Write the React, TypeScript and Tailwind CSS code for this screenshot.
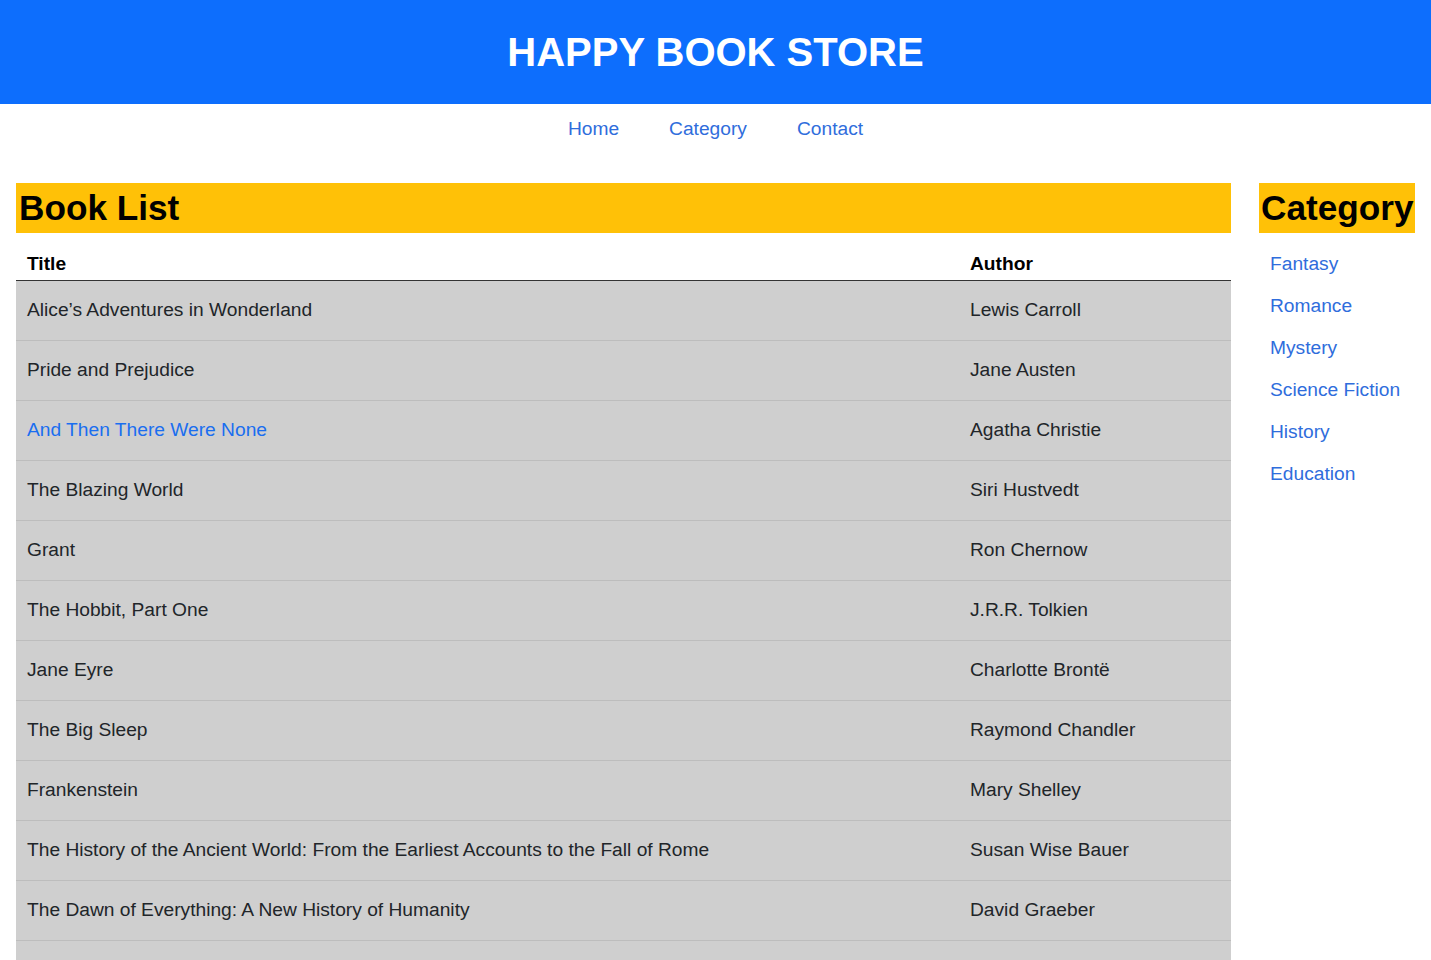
import React from "react";

const books = [
  { title: "Alice’s Adventures in Wonderland", author: "Lewis Carroll" },
  { title: "Pride and Prejudice", author: "Jane Austen" },
  { title: "And Then There Were None", author: "Agatha Christie", active: true },
  { title: "The Blazing World", author: "Siri Hustvedt" },
  { title: "Grant", author: "Ron Chernow" },
  { title: "The Hobbit, Part One", author: "J.R.R. Tolkien" },
  { title: "Jane Eyre", author: "Charlotte Brontë" },
  { title: "The Big Sleep", author: "Raymond Chandler" },
  { title: "Frankenstein", author: "Mary Shelley" },
  { title: "The History of the Ancient World: From the Earliest Accounts to the Fall of Rome", author: "Susan Wise Bauer" },
  { title: "The Dawn of Everything: A New History of Humanity", author: "David Graeber" },
];

const categories = ["Fantasy", "Romance", "Mystery", "Science Fiction", "History", "Education"];

const App = () => {
  return (
    <div className="min-h-screen bg-white font-['Liberation_Sans',Arial,sans-serif] text-[19.2px] text-[#212529]">
      <header className="flex h-[104px] items-center justify-center bg-[#0d6efd]">
        <h1 className="text-[40px] font-bold leading-none text-white">HAPPY BOOK STORE</h1>
      </header>
      <nav className="flex justify-center gap-[50px] pt-[13px] pb-[11px] leading-[24px] text-[#2f6ddc]">
        <a href="#">Home</a>
        <a href="#">Category</a>
        <a href="#">Contact</a>
      </nav>
      <div className="mt-[31px] flex gap-[28px] px-4">
        <main className="flex-1">
          <h2 className="flex h-[50px] items-center bg-[#ffc107] px-[3px] text-[35.2px] font-bold leading-none text-black">
            Book List
          </h2>
          <div className="mt-2">
            <div className="grid h-[40px] grid-cols-[943px_1fr] items-end border-b border-[#333] pb-[5px] font-bold leading-[23px] text-black">
              <div className="px-[11px]">Title</div>
              <div className="px-[11px]">Author</div>
            </div>
            {books.map((b) => (
              <div
                key={b.title}
                className="grid h-[60px] grid-cols-[943px_1fr] items-center border-b border-[#bdbdbd] bg-[#cfcfcf] pb-[2px] leading-[23px]"
              >
                <div className={b.active ? "px-[11px] text-[#1a6ef0]" : "px-[11px]"}>{b.title}</div>
                <div className="px-[11px]">{b.author}</div>
              </div>
            ))}
            <div className="h-[60px] border-b border-[#bdbdbd] bg-[#cfcfcf]" />
          </div>
        </main>
        <aside className="w-[156px]">
          <h2 className="flex h-[50px] w-fit items-center bg-[#ffc107] pl-[2px] pr-[1px] text-[35.2px] font-bold leading-none text-black">
            Category
          </h2>
          <ul className="mt-[10px] flex flex-col text-[#2f6ddc]">
            {categories.map((c) => (
              <li key={c} className="flex h-[42px] items-center px-[11px]">
                <a href="#">{c}</a>
              </li>
            ))}
          </ul>
        </aside>
      </div>
    </div>
  );
};

export default App;
